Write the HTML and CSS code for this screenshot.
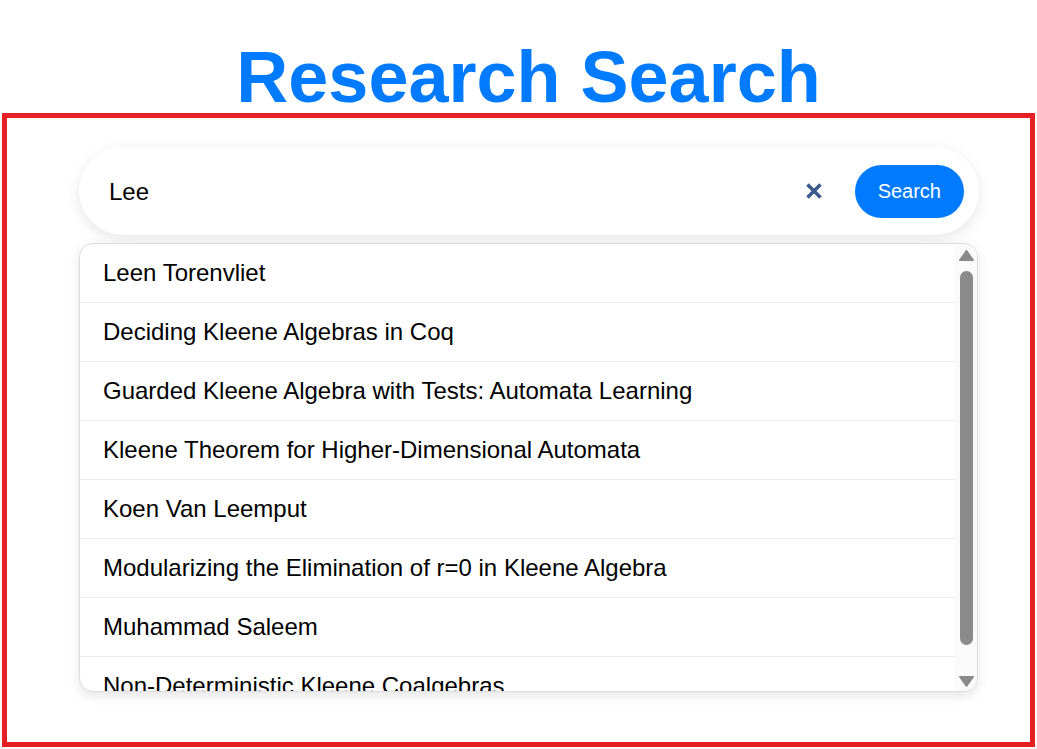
FILE: index.html
```html
<!DOCTYPE html>
<html lang="en">
<head>
<meta charset="utf-8">
<title>Research Search</title>
<link rel="stylesheet" href="styles.css">
</head>
<body>
<h1 class="title">Research Search</h1>
<div class="frame">
  <div class="search-bar">
    <input class="search-input" type="text" value="Lee">
    <button class="clear-btn" aria-label="Clear">
      <svg width="18" height="18" viewBox="0 0 18 18"><path d="M2.5 2.5 L15.5 15.5 M15.5 2.5 L2.5 15.5" stroke="#3c5a8a" stroke-width="3.6" stroke-linecap="butt"/></svg>
    </button>
    <button class="search-btn">Search</button>
  </div>
  <div class="results">
    <ul class="result-items">
      <li class="result">Leen Torenvliet</li>
      <li class="result">Deciding Kleene Algebras in Coq</li>
      <li class="result">Guarded Kleene Algebra with Tests: Automata Learning</li>
      <li class="result">Kleene Theorem for Higher-Dimensional Automata</li>
      <li class="result">Koen Van Leemput</li>
      <li class="result">Modularizing the Elimination of r=0 in Kleene Algebra</li>
      <li class="result">Muhammad Saleem</li>
      <li class="result">Non-Deterministic Kleene Coalgebras</li>
    </ul>
    <div class="scrollbar" aria-hidden="true">
      <div class="scroll-btn">
        <svg width="22" height="22" viewBox="0 0 22 22"><path d="M11.5 6.8 L18.2 16.2 L4.8 16.2 Z" fill="#8a8a8a" stroke="#8a8a8a" stroke-width="1.6" stroke-linejoin="round"/></svg>
      </div>
      <div class="scroll-track"><div class="scroll-thumb"></div></div>
      <div class="scroll-btn">
        <svg width="22" height="22" viewBox="0 0 22 22"><path d="M4.8 7.8 L18.2 7.8 L11.5 17 Z" fill="#8a8a8a" stroke="#8a8a8a" stroke-width="1.6" stroke-linejoin="round"/></svg>
      </div>
    </div>
  </div>
</div>
</body>
</html>
```

FILE: styles.css
```css
* { box-sizing: border-box; }

html, body {
  margin: 0;
  padding: 0;
  background: #ffffff;
  font-family: "Liberation Sans", Arial, sans-serif;
}

.title {
  margin: 0;
  padding: 42px 0 0 20px;
  font-size: 72px;
  line-height: 71px;
  font-weight: bold;
  color: #007bff;
  text-align: center;
}

.frame {
  margin: 0 2px;
  border: 5px solid #e41f25;
  padding: 29px 0 50px 72px;
}

.search-bar {
  width: 900px;
  height: 88px;
  display: flex;
  align-items: center;
  background: #ffffff;
  border-radius: 44px;
  box-shadow: 0 4px 14px rgba(0, 0, 0, 0.1);
  padding: 0 15px 0 30px;
}

.search-input {
  flex: 1;
  min-width: 0;
  border: none;
  outline: none;
  background: transparent;
  font-family: "Liberation Sans", Arial, sans-serif;
  font-size: 24px;
  color: #000;
  padding: 0;
  margin-top: 1px;
}

.clear-btn {
  border: none;
  background: transparent;
  padding: 0;
  margin-right: 32px;
  width: 18px;
  height: 18px;
  display: flex;
  align-items: center;
  justify-content: center;
}

.search-btn {
  height: 53px;
  padding: 0 23px;
  border: none;
  border-radius: 27px;
  background: #007bff;
  color: #ffffff;
  font-family: "Liberation Sans", Arial, sans-serif;
  font-size: 20px;
}

.results {
  display: flex;
  margin-top: 8px;
  width: 899px;
  height: 449px;
  overflow: hidden;
  border: 1px solid #dcdcdc;
  border-radius: 14px;
  box-shadow: 0 4px 12px rgba(0, 0, 0, 0.1);
  background: #ffffff;
}

.result-items {
  list-style: none;
  margin: 0;
  padding: 0;
  flex: 1;
  min-width: 0;
  overflow: hidden;
}

.result {
  padding: 16px 23px;
  font-size: 24px;
  line-height: 26px;
  color: #000;
  white-space: nowrap;
  border-bottom: 1px solid #ececec;
}

.scrollbar {
  width: 22px;
  flex: none;
  display: flex;
  flex-direction: column;
  background: #fafafa;
}

.scroll-btn {
  height: 22px;
  flex: none;
}

.scroll-btn svg {
  display: block;
}

.scroll-track {
  flex: 1;
  padding: 5px 0 0 5px;
}

.scroll-thumb {
  width: 13px;
  height: 374px;
  border-radius: 7px;
  background: #8a8a8a;
}
```
